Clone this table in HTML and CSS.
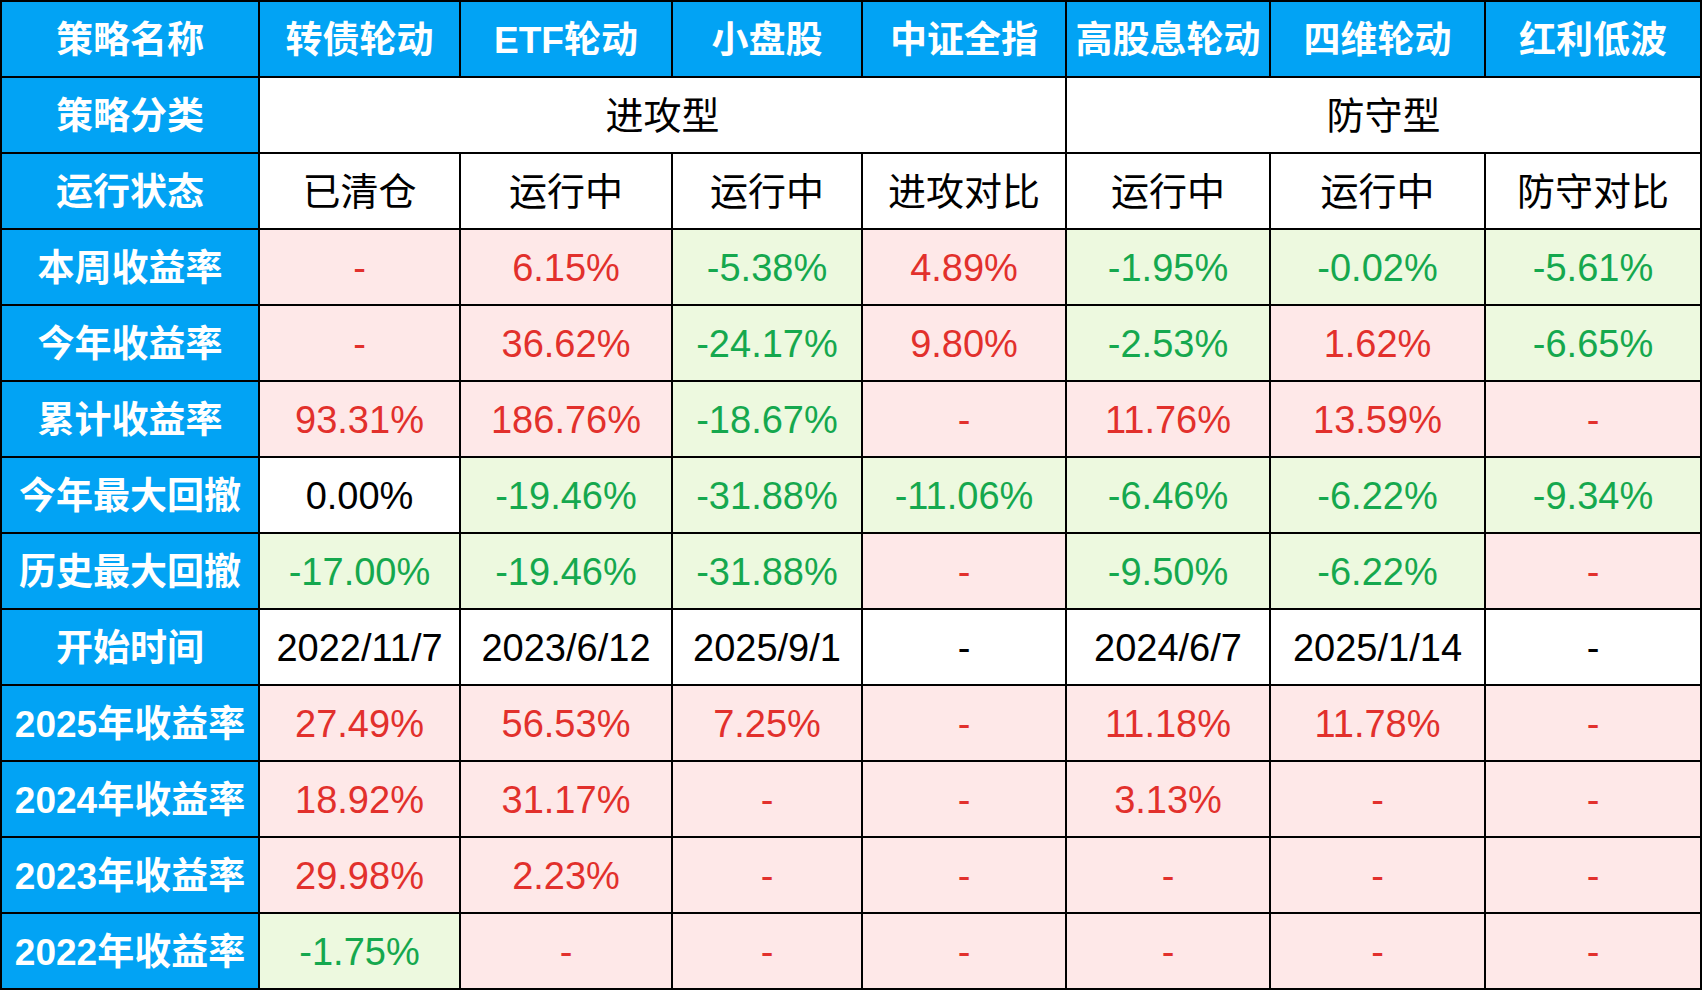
FILE: index.html
```html
<!DOCTYPE html>
<html lang="zh-CN">
<head>
<meta charset="utf-8">
<title>策略对比</title>
<link rel="stylesheet" href="styles.css">
</head>
<body>
<table class="grid">
  <colgroup>
    <col class="c0"><col class="c1"><col class="c2"><col class="c3"><col class="c4"><col class="c5"><col class="c6"><col class="c7">
  </colgroup>
  <tbody>
    <tr>
      <th>策略名称</th><th>转债轮动</th><th>ETF轮动</th><th>小盘股</th><th>中证全指</th><th>高股息轮动</th><th>四维轮动</th><th>红利低波</th>
    </tr>
    <tr>
      <th>策略分类</th><td class="w" colspan="4">进攻型</td><td class="w" colspan="3">防守型</td>
    </tr>
    <tr>
      <th>运行状态</th><td class="w">已清仓</td><td class="w">运行中</td><td class="w">运行中</td><td class="w">进攻对比</td><td class="w">运行中</td><td class="w">运行中</td><td class="w">防守对比</td>
    </tr>
    <tr>
      <th>本周收益率</th><td class="p">-</td><td class="p">6.15%</td><td class="g">-5.38%</td><td class="p">4.89%</td><td class="g">-1.95%</td><td class="g">-0.02%</td><td class="g">-5.61%</td>
    </tr>
    <tr>
      <th>今年收益率</th><td class="p">-</td><td class="p">36.62%</td><td class="g">-24.17%</td><td class="p">9.80%</td><td class="g">-2.53%</td><td class="p">1.62%</td><td class="g">-6.65%</td>
    </tr>
    <tr>
      <th>累计收益率</th><td class="p">93.31%</td><td class="p">186.76%</td><td class="g">-18.67%</td><td class="p">-</td><td class="p">11.76%</td><td class="p">13.59%</td><td class="p">-</td>
    </tr>
    <tr>
      <th>今年最大回撤</th><td class="w">0.00%</td><td class="g">-19.46%</td><td class="g">-31.88%</td><td class="g">-11.06%</td><td class="g">-6.46%</td><td class="g">-6.22%</td><td class="g">-9.34%</td>
    </tr>
    <tr>
      <th>历史最大回撤</th><td class="g">-17.00%</td><td class="g">-19.46%</td><td class="g">-31.88%</td><td class="p">-</td><td class="g">-9.50%</td><td class="g">-6.22%</td><td class="p">-</td>
    </tr>
    <tr>
      <th>开始时间</th><td class="w">2022/11/7</td><td class="w">2023/6/12</td><td class="w">2025/9/1</td><td class="w">-</td><td class="w">2024/6/7</td><td class="w">2025/1/14</td><td class="w">-</td>
    </tr>
    <tr>
      <th>2025年收益率</th><td class="p">27.49%</td><td class="p">56.53%</td><td class="p">7.25%</td><td class="p">-</td><td class="p">11.18%</td><td class="p">11.78%</td><td class="p">-</td>
    </tr>
    <tr>
      <th>2024年收益率</th><td class="p">18.92%</td><td class="p">31.17%</td><td class="p">-</td><td class="p">-</td><td class="p">3.13%</td><td class="p">-</td><td class="p">-</td>
    </tr>
    <tr>
      <th>2023年收益率</th><td class="p">29.98%</td><td class="p">2.23%</td><td class="p">-</td><td class="p">-</td><td class="p">-</td><td class="p">-</td><td class="p">-</td>
    </tr>
    <tr>
      <th>2022年收益率</th><td class="g">-1.75%</td><td class="p">-</td><td class="p">-</td><td class="p">-</td><td class="p">-</td><td class="p">-</td><td class="p">-</td>
    </tr>
  </tbody>
</table>
</body>
</html>
```

FILE: styles.css
```css
html, body {
  margin: 0;
  padding: 0;
  background: #ffffff;
}

.grid {
  table-layout: fixed;
  border-collapse: separate;
  border-spacing: 2px;
  background: #000000;
  width: 1702px;
  font-family: "Liberation Sans", "Noto Sans CJK SC", sans-serif;
  font-size: 38px;
}

.c0 { width: 256px; }
.c1 { width: 199px; }
.c2 { width: 210px; }
.c3 { width: 188px; }
.c4 { width: 202px; }
.c5 { width: 202px; }
.c6 { width: 213px; }
.c7 { width: 214px; }

.grid th,
.grid td {
  box-sizing: border-box;
  height: 74px;
  padding: 2px 0 0 0;
  text-align: center;
  vertical-align: middle;
  white-space: nowrap;
  overflow: hidden;
  line-height: 1;
}

.grid th {
  background: #02a3f4;
  color: #ffffff;
  font-weight: bold;
  font-size: 37px;
}

.grid td.w {
  background: #ffffff;
  color: #000000;
}

.grid td.p {
  background: #fee8e8;
  color: #e2302c;
}

.grid td.g {
  background: #edf9df;
  color: #15a84e;
}
```
